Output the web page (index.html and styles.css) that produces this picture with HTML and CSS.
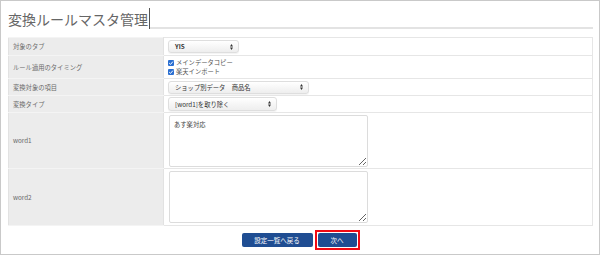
FILE: index.html
```html
<!DOCTYPE html>
<html lang="ja">
<head>
<meta charset="utf-8">
<title>変換ルールマスタ管理</title>
<link rel="stylesheet" href="styles.css">
</head>
<body>
<div class="frame">
  <div class="title-row">
    <h1 class="title">変換ルールマスタ管理</h1>
    <span class="caret"></span>
    <span class="title-line"></span>
  </div>
  <table class="form">
    <tr class="r1">
      <th>対象のタブ</th>
      <td><div class="sel sel-tab"><span class="sel-text bold">YIS</span><svg class="arrow" width="3" height="6" viewBox="0 0 3 6"><polygon points="0,2.4 1.5,0 3,2.4" fill="#333"/><polygon points="0,3.6 3,3.6 1.5,6" fill="#333"/></svg></div></td>
    </tr>
    <tr class="r2">
      <th>ルール適用のタイミング</th>
      <td>
        <div class="cb"><svg width="6" height="6" viewBox="0 0 6 6"><rect width="6" height="6" rx="1" fill="#2b6fd1"/><path d="M1.2 3.1 L2.5 4.4 L4.9 1.6" stroke="#fff" stroke-width="1" fill="none"/></svg><span>メインデータコピー</span></div>
        <div class="cb"><svg width="6" height="6" viewBox="0 0 6 6"><rect width="6" height="6" rx="1" fill="#2b6fd1"/><path d="M1.2 3.1 L2.5 4.4 L4.9 1.6" stroke="#fff" stroke-width="1" fill="none"/></svg><span>楽天インポート</span></div>
      </td>
    </tr>
    <tr class="r3">
      <th>変換対象の項目</th>
      <td><div class="sel sel-item"><span class="sel-text">ショップ別データ　商品名</span><svg class="arrow" width="3" height="6" viewBox="0 0 3 6"><polygon points="0,2.4 1.5,0 3,2.4" fill="#333"/><polygon points="0,3.6 3,3.6 1.5,6" fill="#333"/></svg></div></td>
    </tr>
    <tr class="r4">
      <th>変換タイプ</th>
      <td><div class="sel sel-type"><span class="sel-text">[word1]を取り除く</span><svg class="arrow" width="3" height="6" viewBox="0 0 3 6"><polygon points="0,2.4 1.5,0 3,2.4" fill="#333"/><polygon points="0,3.6 3,3.6 1.5,6" fill="#333"/></svg></div></td>
    </tr>
    <tr class="r5">
      <th>word1</th>
      <td><textarea class="ta">あす楽対応</textarea></td>
    </tr>
    <tr class="r6">
      <th>word2</th>
      <td><textarea class="ta"></textarea></td>
    </tr>
  </table>
  <div class="actions">
    <button class="btn btn-back">設定一覧へ戻る</button>
    <span class="focus-box"><button class="btn btn-next">次へ</button></span>
  </div>
</div>
</body>
</html>
```
FILE: styles.css
```css
html, body {
  margin: 0;
  padding: 0;
  background: #fff;
}
body {
  font-family: "Noto Sans CJK JP", "Noto Sans", sans-serif;
  color: #555;
}
.frame {
  width: 600px;
  height: 255px;
  box-sizing: border-box;
  border: 1px solid #c9c9c9;
  padding: 6px 6px 0 7px;
  background: #fff;
}
.title-row {
  display: flex;
  align-items: flex-end;
  height: 22px;
}
.title {
  margin: 0;
  font-size: 14px;
  font-weight: 400;
  line-height: 20px;
  color: #666;
  white-space: nowrap;
}
.caret {
  width: 1px;
  height: 21px;
  background: #555;
  margin-left: 1px;
}
.title-line {
  flex: 1;
  height: 0;
  border-bottom: 2px solid #e3e3e3;
}
.form {
  width: 100%;
  margin-top: 8px;
  border-collapse: collapse;
  border: 1px solid #e2e2e2;
  table-layout: fixed;
}
.form th,
.form td {
  border: 1px solid #e6e6e6;
  padding: 0;
  vertical-align: middle;
}
.form th {
  width: 155px;
  box-sizing: border-box;
  background: #ececec;
  text-align: left;
  font-weight: 400;
  font-size: 6.3px;
  color: #6a6a6a;
  padding-left: 4px;
  border-color: #f4f4f4 #e2e2e2 #f4f4f4 #e2e2e2;
}
.form td {
  padding-left: 4px;
  background: #fff;
}
.r1 { height: 18px; }
.r2 { height: 23px; }
.r3 { height: 17px; }
.r4 { height: 17px; }
.r5 { height: 56px; }
.r6 { height: 57px; }

.sel {
  display: flex;
  align-items: center;
  justify-content: space-between;
  box-sizing: border-box;
  height: 13px;
  padding: 0 5px 0 6px;
  border: 1px solid #dedede;
  border-radius: 3px;
  background: linear-gradient(#ffffff, #eeeeee);
  box-shadow: 0 1px 1px rgba(0, 0, 0, 0.05);
  font-size: 6.3px;
  color: #333;
}
.sel-tab { width: 71px; }
.sel-item { width: 141px; height: 13px; }
.sel-type { width: 109px; height: 14px; }
.sel-text { white-space: nowrap; }
.bold { font-weight: 700; }
.arrow { display: block; flex: none; }

.cb {
  display: flex;
  align-items: center;
  gap: 2px;
  font-size: 6.3px;
  line-height: 9px;
  color: #555;
}
.cb svg { display: block; flex: none; }

.ta {
  display: block;
  width: 199px;
  height: 52px;
  box-sizing: border-box;
  margin: 0 0 0 1px;
  border: 1px solid #dcdcdc;
  border-radius: 2px;
  padding: 4px 4px;
  font-family: "Noto Sans CJK JP", "Noto Sans", sans-serif;
  font-size: 6.3px;
  color: #444;
  background: #fff;
  resize: both;
}

.actions {
  display: flex;
  justify-content: center;
  align-items: center;
  gap: 2px;
  margin-top: 4px;
}
.btn {
  display: block;
  height: 14px;
  box-sizing: border-box;
  border: none;
  border-radius: 2px;
  background: #1f4d92;
  color: #fff;
  font-family: "Noto Sans CJK JP", "Noto Sans", sans-serif;
  font-size: 6.5px;
  padding: 0;
  line-height: 14px;
}
.btn-back { width: 71px; }
.btn-next { width: 39px; }
.focus-box {
  display: block;
  border: 2px solid #f00a14;
  padding: 1px;
  background: #fff;
}
```
